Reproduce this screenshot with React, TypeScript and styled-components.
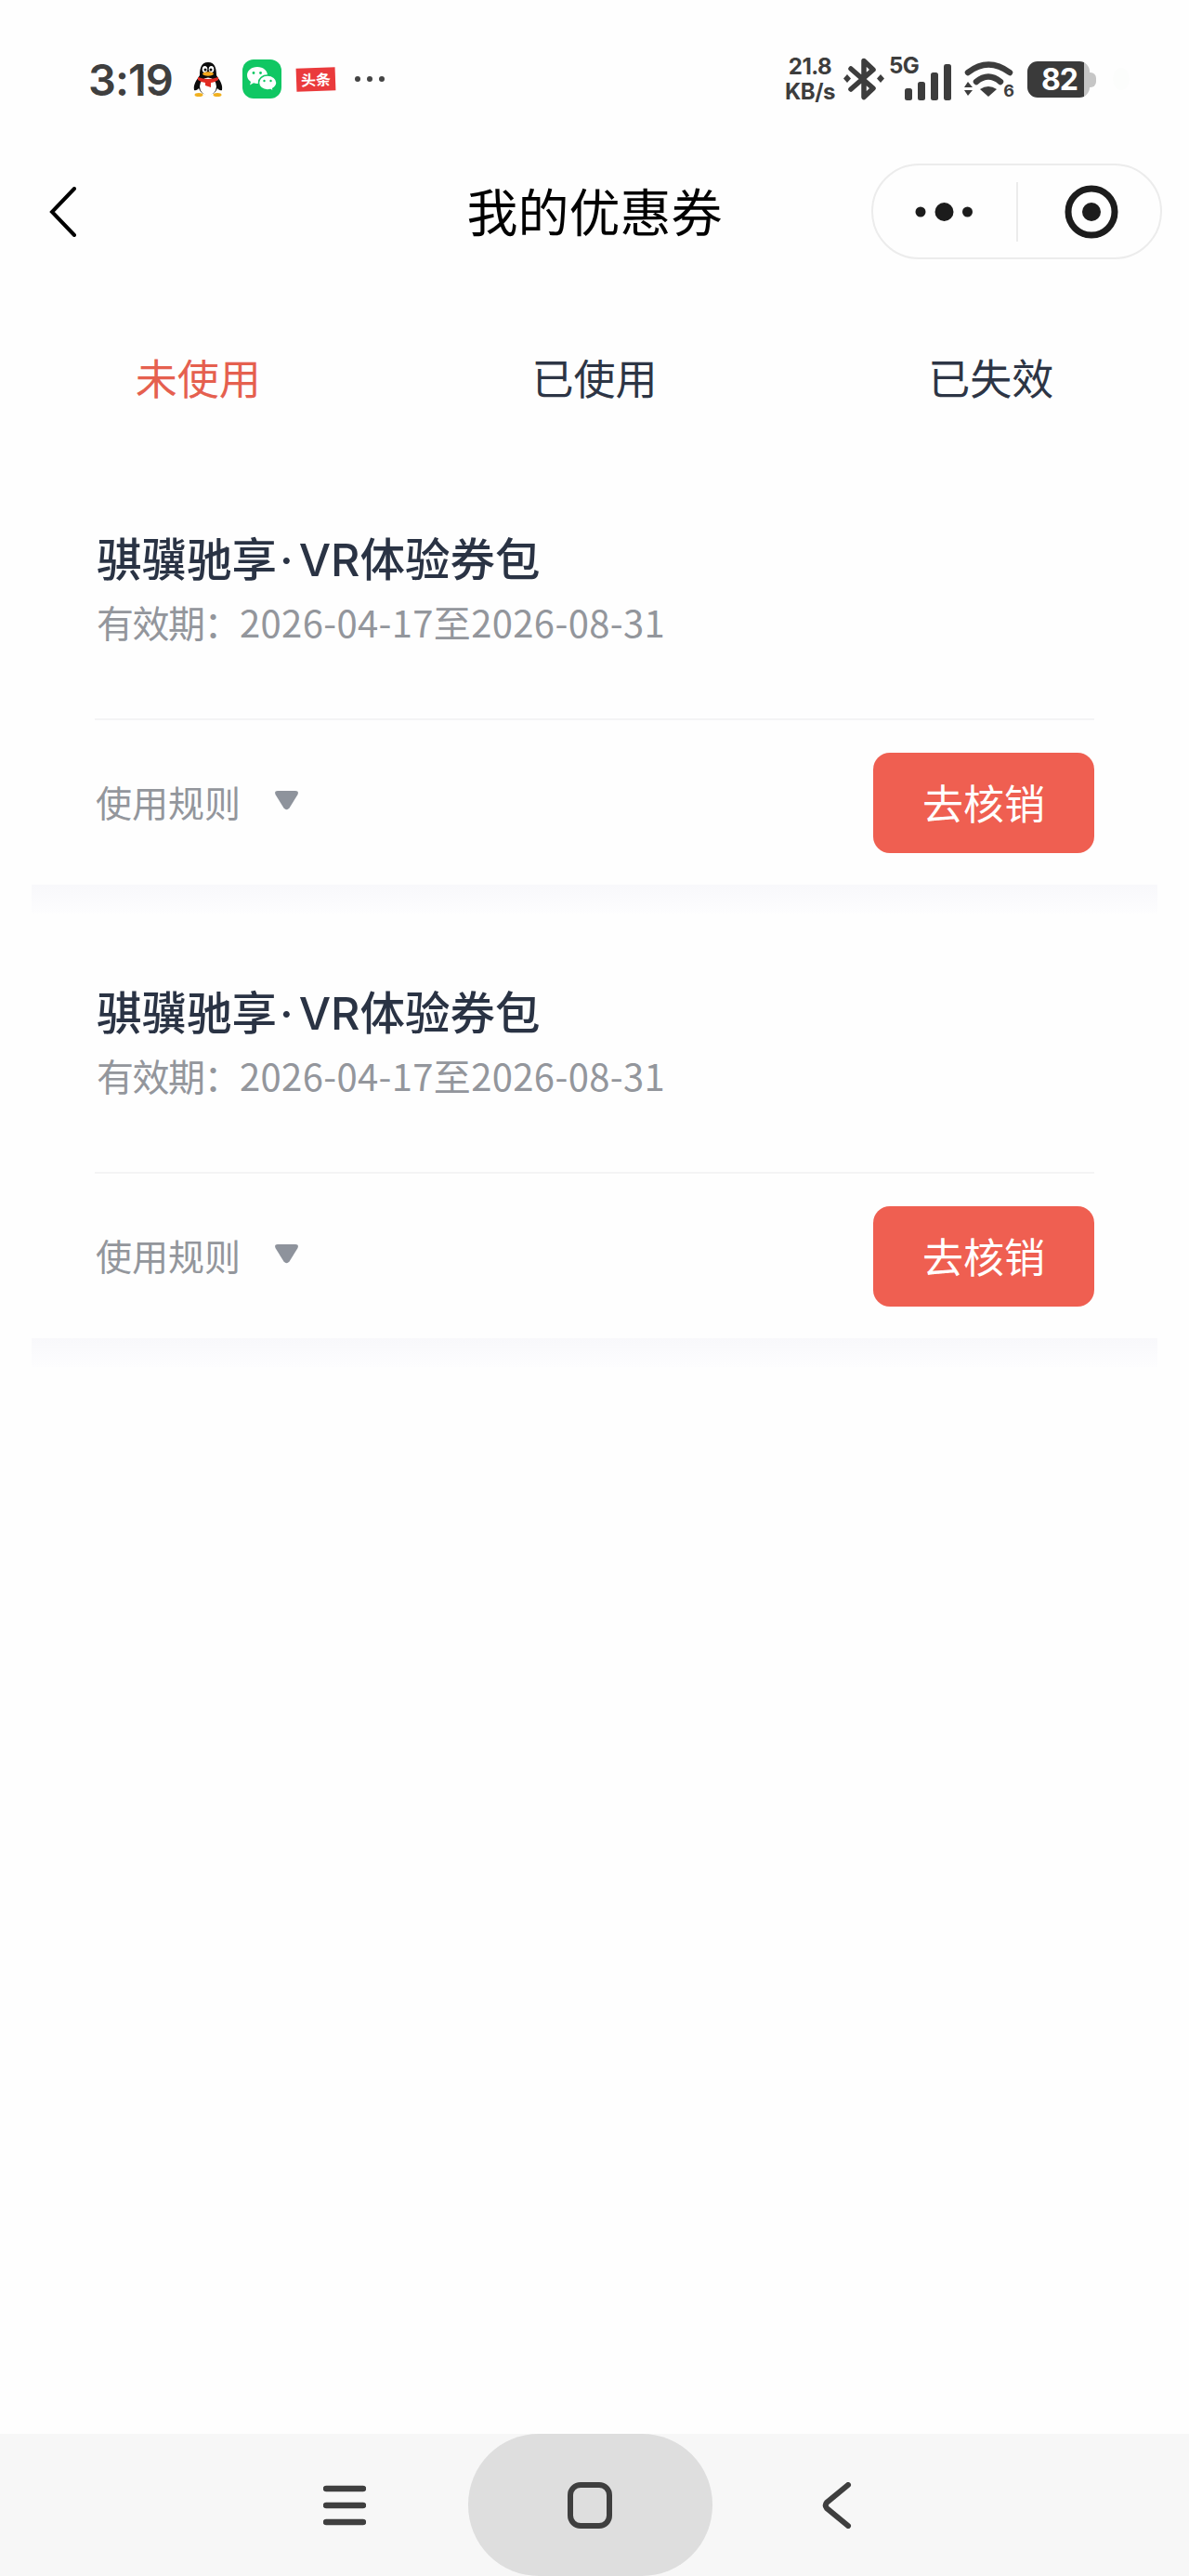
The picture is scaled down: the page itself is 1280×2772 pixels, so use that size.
import { FC } from 'react';
import styled, { createGlobalStyle } from 'styled-components';

const coupons = [
  { id: 1, brand: '骐骥驰享', product: 'VR体验券包', range: '2026-04-17至2026-08-31' },
  { id: 2, brand: '骐骥驰享', product: 'VR体验券包', range: '2026-04-17至2026-08-31' },
];

const tabs = ['未使用', '已使用', '已失效'];

const App: FC = () => {
  return (
    <Page>
      <GlobalStyle />
      <StatusBar>
        <StatusLeft>
          <Clock>3:19</Clock>
          <PenguinIcon />
          <ChatIcon />
          <NewsFlag>头条</NewsFlag>
          <MoreDots>
            <i />
            <i />
            <i />
          </MoreDots>
        </StatusLeft>
        <StatusRight>
          <NetSpeed>
            <b>21.8</b>
            <b>KB/s</b>
          </NetSpeed>
          <BluetoothIcon />
          <Signal>
            <SignalLabel>5G</SignalLabel>
            <SignalBars />
          </Signal>
          <WifiIcon />
          <Battery>82</Battery>
          <FaintDot />
        </StatusRight>
      </StatusBar>

      <NavBar>
        <BackButton>
          <svg width="30" height="54" viewBox="0 0 30 54" fill="none">
            <path d="M27 2 L3 27 L27 52" stroke="#000" strokeWidth="4" strokeLinecap="round" strokeLinejoin="miter" />
          </svg>
        </BackButton>
        <Title>我的优惠券</Title>
        <Capsule>
          <svg width="154" height="99" viewBox="0 0 154 99">
            <circle cx="51" cy="50" r="5.5" fill="#1c1c1c" />
            <circle cx="76.5" cy="50" r="10" fill="#1c1c1c" />
            <circle cx="101.5" cy="50" r="5.5" fill="#1c1c1c" />
          </svg>
          <CapsuleDivider />
          <svg width="153" height="99" viewBox="0 0 153 99">
            <circle cx="79" cy="50" r="25" fill="none" stroke="#1c1c1c" strokeWidth="7" />
            <circle cx="79" cy="50" r="10" fill="#1c1c1c" />
          </svg>
        </Capsule>
      </NavBar>

      <Tabs>
        {tabs.map((tab, index) => (
          <Tab key={tab} $active={index === 0}>{tab}</Tab>
        ))}
      </Tabs>

      <CouponList>
        {coupons.map((coupon) => (
          <Coupon key={coupon.id}>
            <CouponBody>
              <CouponName>
                {coupon.brand}
                <NameDot>·</NameDot>
                {coupon.product}
              </CouponName>
              <CouponPeriod>
                <PeriodLabel>有效期：</PeriodLabel>
                {coupon.range}
              </CouponPeriod>
            </CouponBody>
            <CouponFooter>
              <Rules>
                使用规则
                <svg width="27" height="22" viewBox="0 0 27 22">
                  <path d="M4 1 H23 Q27 1 25.5 5 L16.5 19.5 Q13.5 23 10.5 19.5 L1.5 5 Q0 1 4 1 Z" fill="#8e939c" />
                </svg>
              </Rules>
              <RedeemButton>去核销</RedeemButton>
            </CouponFooter>
            <CouponShade />
          </Coupon>
        ))}
      </CouponList>

      <SystemBar>
        <MenuKey>
          <svg width="46" height="44" viewBox="0 0 46 44">
            <path d="M3 4 H43 M3 22 H43 M3 40 H43" stroke="#3f3f3f" strokeWidth="6.5" strokeLinecap="round" />
          </svg>
        </MenuKey>
        <HomeKey>
          <svg width="50" height="50" viewBox="0 0 50 50">
            <rect x="3" y="3" width="42" height="44" rx="11" fill="none" stroke="#3f3f3f" strokeWidth="6" />
          </svg>
        </HomeKey>
        <ReturnKey>
          <svg width="32" height="50" viewBox="0 0 32 50">
            <path d="M28 3 L5 22 Q2.5 25 5 28 L28 47" fill="none" stroke="#3f3f3f" strokeWidth="6" strokeLinecap="round" />
          </svg>
        </ReturnKey>
      </SystemBar>
    </Page>
  );
};

export default App;

const PenguinIcon: FC = () => (
  <PenguinSvg width="32" height="39" viewBox="0 0 32 39">
    <ellipse cx="6" cy="36" rx="4.5" ry="2" fill="#f0b020" />
    <ellipse cx="26" cy="36" rx="4.5" ry="2" fill="#f0b020" />
    <path d="M16 1 C8 1 7 9 7 15 C3 21 0 25 1 31 C3 32 5 30 6 29 C8 34 12 36 16 36 C20 36 24 34 26 29 C27 30 29 32 31 31 C32 25 29 21 25 15 C25 9 24 1 16 1 Z" fill="#0c0c0c" />
    <ellipse cx="16" cy="27" rx="9" ry="9.5" fill="#fff" />
    <ellipse cx="12.5" cy="8.5" rx="2.8" ry="3.6" fill="#fff" />
    <ellipse cx="19.5" cy="8.5" rx="2.8" ry="3.6" fill="#fff" />
    <circle cx="13" cy="9" r="1.5" fill="#0c0c0c" />
    <circle cx="19" cy="9" r="1.5" fill="#0c0c0c" />
    <ellipse cx="16" cy="13.5" rx="6" ry="2.2" fill="#f5a81c" />
    <path d="M5 17 Q16 21 27 17 L27 20 Q22 23 19 23 L19 28 L13 26 L13 23 Q9 23 5 20 Z" fill="#e22b22" />
  </PenguinSvg>
);

const ChatIcon: FC = () => (
  <ChatBadge>
    <svg width="34" height="28" viewBox="0 0 34 28">
      <path d="M12 1 C5.5 1 1 5 1 10 C1 13 2.5 15.3 5 17 L4 20.5 L8 18.3 C9.5 18.8 10.6 19 12 19 C18.5 19 23 15 23 10 C23 5 18.5 1 12 1 Z" fill="#fff" />
      <path d="M23 10 C17.5 10 13.5 13.5 13.5 18 C13.5 22.5 17.5 26 23 26 C24 26 25.2 25.8 26.2 25.5 L29.5 27.3 L28.7 24.3 C31.3 22.7 33 20.5 33 18 C33 13.5 28.5 10 23 10 Z" fill="#fff" stroke="#10c763" strokeWidth="1.5" />
      <circle cx="8" cy="7.5" r="1.4" fill="#10c763" />
      <circle cx="15.5" cy="7.5" r="1.4" fill="#10c763" />
      <circle cx="19.5" cy="16" r="1.2" fill="#10c763" />
      <circle cx="26.5" cy="16" r="1.2" fill="#10c763" />
    </svg>
  </ChatBadge>
);

const BluetoothIcon: FC = () => (
  <BluetoothSvg width="44" height="46" viewBox="0 0 44 46">
    <path d="M8 12 L32 33 L22 42.5 V3.5 L32 13 L8 34" fill="none" stroke="#3d3d3d" strokeWidth="5.5" strokeLinejoin="round" strokeLinecap="round" />
    <path d="M4 18 L8 22.5 L4 27 L0 22.5 Z" fill="#3d3d3d" />
    <path d="M40 18 L44 22.5 L40 27 L36 22.5 Z" fill="#3d3d3d" />
  </BluetoothSvg>
);

const SignalBars: FC = () => (
  <svg width="50" height="39" viewBox="0 0 50 39">
    <rect x="0" y="26" width="8" height="13" rx="2.5" fill="#3d3d3d" />
    <rect x="14" y="19" width="8" height="20" rx="2.5" fill="#3d3d3d" />
    <rect x="28" y="9" width="8" height="30" rx="2.5" fill="#3d3d3d" />
    <rect x="42" y="0" width="8" height="39" rx="2.5" fill="#3d3d3d" />
  </svg>
);

const WifiIcon: FC = () => (
  <Wifi>
    <svg width="54" height="42" viewBox="0 0 54 42">
      <path d="M4 14 Q26 -3 49 14" fill="none" stroke="#3d3d3d" strokeWidth="6.5" strokeLinecap="round" />
      <path d="M13 24 Q26 13 39 24" fill="none" stroke="#3d3d3d" strokeWidth="6.5" strokeLinecap="round" />
      <path d="M17 32 Q26 26 35 32 L26 40 Z" fill="#3d3d3d" />
      <path d="M4 24 L9 30 H0 Z" fill="#3d3d3d" />
      <path d="M0 33 H9 L4 39 Z" fill="#3d3d3d" />
    </svg>
    <WifiGeneration>6</WifiGeneration>
  </Wifi>
);

const GlobalStyle = createGlobalStyle`
  html, body {
    margin: 0;
    padding: 0;
    background: #fefefe;
  }
  body {
    font-family: "Noto Sans CJK SC", "Noto Sans", sans-serif;
  }
`;

const Page = styled.div`
  display: flex;
  flex-direction: column;
  width: 1280px;
  height: 2772px;
  overflow: hidden;
  background: #fefefe;
`;

const StatusBar = styled.div`
  display: flex;
  justify-content: space-between;
  align-items: center;
  height: 170px;
  flex-shrink: 0;
`;

const StatusLeft = styled.div`
  display: flex;
  align-items: center;
  padding-left: 95px;
`;

const StatusRight = styled.div`
  display: flex;
  align-items: center;
  padding-right: 64px;
`;

const Clock = styled.div`
  width: 90px;
  font-family: Inter, sans-serif;
  font-size: 47px;
  font-weight: 600;
  letter-spacing: -1px;
  color: #3f3f3f;
`;

const PenguinSvg = styled.svg`
  margin-left: 23px;
`;

const ChatBadge = styled.div`
  display: flex;
  align-items: center;
  justify-content: center;
  width: 42px;
  height: 42px;
  margin-left: 21px;
  border-radius: 12px;
  background: #10c763;
`;

const NewsFlag = styled.div`
  width: 42px;
  height: 25px;
  margin-left: 16px;
  font-size: 16px;
  font-weight: 700;
  line-height: 25px;
  text-align: center;
  color: #fff;
  background: #ea3a3c;
  transform: rotate(-2deg);
`;

const MoreDots = styled.div`
  display: flex;
  gap: 7px;
  margin-left: 21px;

  i {
    width: 6px;
    height: 6px;
    border-radius: 50%;
    background: #444;
  }
`;

const NetSpeed = styled.div`
  display: flex;
  flex-direction: column;
  align-items: center;
  width: 54px;
  font-family: Inter, sans-serif;
  color: #3d3d3d;

  b {
    font-weight: 700;
    font-size: 24px;
    line-height: 27px;
    letter-spacing: -0.5px;
  }
`;

const BluetoothSvg = styled.svg`
  margin-left: 9px;
`;

const Signal = styled.div`
  position: relative;
  display: flex;
  align-items: flex-end;
  justify-content: flex-end;
  width: 67px;
  height: 46px;
  margin-left: 5px;
`;

const SignalLabel = styled.span`
  position: absolute;
  top: -6px;
  left: 0;
  font-family: Inter, sans-serif;
  font-size: 24px;
  font-weight: 700;
  letter-spacing: -0.5px;
  color: #3d3d3d;
`;

const Wifi = styled.div`
  position: relative;
  display: flex;
  margin-left: 14px;
`;

const WifiGeneration = styled.span`
  position: absolute;
  right: 0;
  bottom: 0;
  font-family: Inter, sans-serif;
  font-size: 18px;
  font-weight: 700;
  line-height: 16px;
  color: #3d3d3d;
`;

const Battery = styled.div`
  position: relative;
  width: 67px;
  height: 39px;
  margin-left: 14px;
  padding-left: 15px;
  box-sizing: border-box;
  border-radius: 11px;
  background: linear-gradient(to right, #3a3a3a 91%, #c6c6c6 91%);
  font-family: Inter, sans-serif;
  font-size: 32px;
  font-weight: 700;
  line-height: 39px;
  letter-spacing: -1px;
  color: #fff;

  &::after {
    content: '';
    position: absolute;
    top: 12px;
    right: -7px;
    width: 7px;
    height: 16px;
    border-radius: 0 6px 6px 0;
    background: #c6c6c6;
  }
`;

const FaintDot = styled.div`
  width: 18px;
  height: 24px;
  margin-left: 25px;
  border-radius: 50%;
  background: #fcfdfc;
`;

const NavBar = styled.div`
  display: grid;
  grid-template-columns: 1fr auto 1fr;
  align-items: center;
  height: 103px;
  margin-top: 6px;
  flex-shrink: 0;
`;

const BackButton = styled.div`
  display: flex;
  padding-left: 53px;
`;

const Title = styled.div`
  margin-bottom: 6px;
  font-size: 55px;
  line-height: 70px;
  color: #000;
`;

const Capsule = styled.div`
  display: flex;
  align-items: center;
  justify-self: end;
  width: 313px;
  height: 103px;
  margin-right: 29px;
  box-sizing: border-box;
  border: 2px solid #ececec;
  border-radius: 52px;
`;

const CapsuleDivider = styled.div`
  width: 2px;
  height: 64px;
  background: #ececec;
  flex-shrink: 0;
`;

const Tabs = styled.div`
  display: grid;
  grid-template-columns: repeat(3, 1fr);
  margin-top: 79px;
  flex-shrink: 0;
`;

const Tab = styled.div<{ $active: boolean }>`
  height: 96px;
  font-size: 45px;
  line-height: 96px;
  text-align: center;
  color: ${({ $active }) => ($active ? '#e5604f' : '#2d3545')};
`;

const CouponList = styled.div`
  display: flex;
  flex-direction: column;
  margin-top: 41px;
  flex: 1;
`;

const Coupon = styled.div`
  display: flex;
  flex-direction: column;
  margin: 0 34px;
`;

const CouponBody = styled.div`
  display: flex;
  flex-direction: column;
  gap: 8px;
  padding: 78px 68px 76px 70px;
`;

const CouponName = styled.div`
  height: 60px;
  font-family: Inter, "Noto Sans CJK SC", sans-serif;
  font-size: 48.5px;
  font-weight: 500;
  line-height: 60px;
  color: #2a3344;
`;

const NameDot = styled.span`
  margin: 0 6px 0 3px;
`;

const CouponPeriod = styled.div`
  height: 56px;
  font-size: 40px;
  line-height: 56px;
  letter-spacing: 0.35px;
  color: #93969c;
`;

const PeriodLabel = styled.span`
  letter-spacing: -1.5px;
`;

const CouponFooter = styled.div`
  display: flex;
  justify-content: space-between;
  align-items: center;
  margin: 0 68px;
  padding: 35px 0 34px;
  border-top: 2px solid #f4f4f5;
`;

const Rules = styled.div`
  display: flex;
  align-items: center;
  gap: 36px;
  margin-bottom: 5px;
  padding-left: 1px;
  font-size: 39px;
  color: #93969c;

  svg {
    margin-top: -2px;
  }
`;

const RedeemButton = styled.button`
  width: 238px;
  height: 108px;
  padding: 0 0 3px;
  border: none;
  border-radius: 18px;
  background: #ef5f51;
  font-family: inherit;
  font-size: 44px;
  color: #fff;
`;

const CouponShade = styled.div`
  height: 31px;
  background: linear-gradient(to bottom, #f8f8fb, #fdfdfe);
`;

const SystemBar = styled.div`
  display: flex;
  align-items: center;
  height: 153px;
  padding-left: 348px;
  flex-shrink: 0;
  background: #f7f7f7;
`;

const MenuKey = styled.div`
  display: flex;
  width: 46px;
`;

const HomeKey = styled.div`
  display: flex;
  align-items: center;
  justify-content: center;
  width: 263px;
  height: 153px;
  margin-left: 110px;
  border-radius: 76px;
  background: #dedede;
`;

const ReturnKey = styled.div`
  display: flex;
  margin-left: 118px;
`;
